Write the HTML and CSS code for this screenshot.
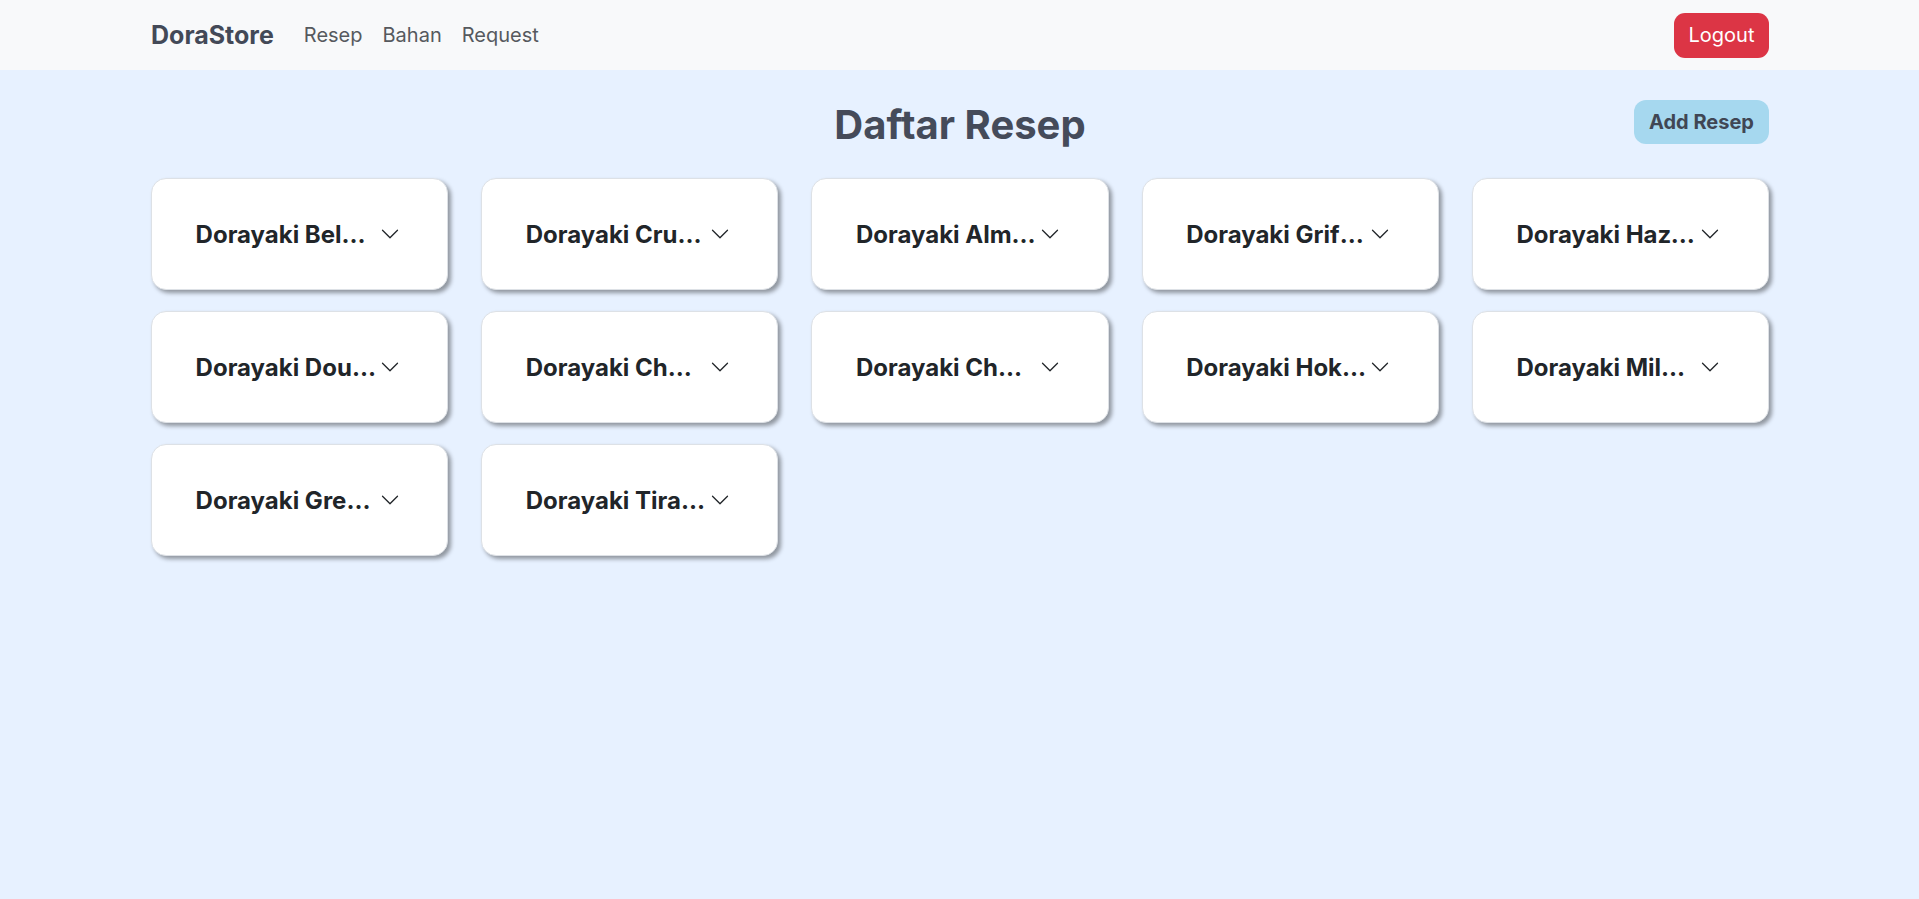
FILE: index.html
```html
<!DOCTYPE html>
<html lang="id">
<head>
<meta charset="utf-8">
<title>DoraStore - Daftar Resep</title>
<link rel="stylesheet" href="styles.css">
</head>
<body>
<nav class="navbar">
  <div class="nav-left">
    <a class="brand" href="#">DoraStore</a>
    <a class="nav-link" href="#">Resep</a>
    <a class="nav-link" href="#">Bahan</a>
    <a class="nav-link" href="#">Request</a>
  </div>
  <button class="btn-logout">Logout</button>
</nav>
<main class="main">
  <div class="page-head">
    <div></div>
    <h1 class="page-title">Daftar Resep</h1>
    <button class="btn-add">Add Resep</button>
  </div>
  <div class="grid">
    <div class="card"><span class="card-title">Dorayaki Belgian Chocolate</span><svg class="chev" viewBox="0 0 16 16"><path d="M1.646 4.646a.5.5 0 0 1 .708 0L8 10.293l5.646-5.647a.5.5 0 0 1 .708.708l-6 6a.5.5 0 0 1-.708 0l-6-6a.5.5 0 0 1 0-.708z"/></svg></div>
    <div class="card"><span class="card-title">Dorayaki Crunchy Cheese</span><svg class="chev" viewBox="0 0 16 16"><path d="M1.646 4.646a.5.5 0 0 1 .708 0L8 10.293l5.646-5.647a.5.5 0 0 1 .708.708l-6 6a.5.5 0 0 1-.708 0l-6-6a.5.5 0 0 1 0-.708z"/></svg></div>
    <div class="card"><span class="card-title">Dorayaki Almond Crunch</span><svg class="chev" viewBox="0 0 16 16"><path d="M1.646 4.646a.5.5 0 0 1 .708 0L8 10.293l5.646-5.647a.5.5 0 0 1 .708.708l-6 6a.5.5 0 0 1-.708 0l-6-6a.5.5 0 0 1 0-.708z"/></svg></div>
    <div class="card"><span class="card-title">Dorayaki Grifin Cheese</span><svg class="chev" viewBox="0 0 16 16"><path d="M1.646 4.646a.5.5 0 0 1 .708 0L8 10.293l5.646-5.647a.5.5 0 0 1 .708.708l-6 6a.5.5 0 0 1-.708 0l-6-6a.5.5 0 0 1 0-.708z"/></svg></div>
    <div class="card"><span class="card-title">Dorayaki Hazelnut</span><svg class="chev" viewBox="0 0 16 16"><path d="M1.646 4.646a.5.5 0 0 1 .708 0L8 10.293l5.646-5.647a.5.5 0 0 1 .708.708l-6 6a.5.5 0 0 1-.708 0l-6-6a.5.5 0 0 1 0-.708z"/></svg></div>
    <div class="card"><span class="card-title">Dorayaki Double Choco</span><svg class="chev" viewBox="0 0 16 16"><path d="M1.646 4.646a.5.5 0 0 1 .708 0L8 10.293l5.646-5.647a.5.5 0 0 1 .708.708l-6 6a.5.5 0 0 1-.708 0l-6-6a.5.5 0 0 1 0-.708z"/></svg></div>
    <div class="card"><span class="card-title">Dorayaki Ch… Cheese</span><svg class="chev" viewBox="0 0 16 16"><path d="M1.646 4.646a.5.5 0 0 1 .708 0L8 10.293l5.646-5.647a.5.5 0 0 1 .708.708l-6 6a.5.5 0 0 1-.708 0l-6-6a.5.5 0 0 1 0-.708z"/></svg></div>
    <div class="card"><span class="card-title">Dorayaki Ch… Chocolate</span><svg class="chev" viewBox="0 0 16 16"><path d="M1.646 4.646a.5.5 0 0 1 .708 0L8 10.293l5.646-5.647a.5.5 0 0 1 .708.708l-6 6a.5.5 0 0 1-.708 0l-6-6a.5.5 0 0 1 0-.708z"/></svg></div>
    <div class="card"><span class="card-title">Dorayaki Hokkaido</span><svg class="chev" viewBox="0 0 16 16"><path d="M1.646 4.646a.5.5 0 0 1 .708 0L8 10.293l5.646-5.647a.5.5 0 0 1 .708.708l-6 6a.5.5 0 0 1-.708 0l-6-6a.5.5 0 0 1 0-.708z"/></svg></div>
    <div class="card"><span class="card-title">Dorayaki Mil… Tea</span><svg class="chev" viewBox="0 0 16 16"><path d="M1.646 4.646a.5.5 0 0 1 .708 0L8 10.293l5.646-5.647a.5.5 0 0 1 .708.708l-6 6a.5.5 0 0 1-.708 0l-6-6a.5.5 0 0 1 0-.708z"/></svg></div>
    <div class="card"><span class="card-title">Dorayaki Green Tea</span><svg class="chev" viewBox="0 0 16 16"><path d="M1.646 4.646a.5.5 0 0 1 .708 0L8 10.293l5.646-5.647a.5.5 0 0 1 .708.708l-6 6a.5.5 0 0 1-.708 0l-6-6a.5.5 0 0 1 0-.708z"/></svg></div>
    <div class="card"><span class="card-title">Dorayaki Tiramisu</span><svg class="chev" viewBox="0 0 16 16"><path d="M1.646 4.646a.5.5 0 0 1 .708 0L8 10.293l5.646-5.647a.5.5 0 0 1 .708.708l-6 6a.5.5 0 0 1-.708 0l-6-6a.5.5 0 0 1 0-.708z"/></svg></div>
  </div>
</main>
</body>
</html>
```
FILE: styles.css
```css
* { box-sizing: border-box; }
html, body { margin: 0; padding: 0; }
body {
  background: #e7f1ff;
  font-family: Inter, "Noto Sans", sans-serif;
  color: #212529;
  min-height: 899px;
}
.navbar {
  height: 70px;
  background: #f8f9fa;
  display: flex;
  align-items: center;
  justify-content: space-between;
  padding: 0 150px 0 151px;
}
.nav-left { display: flex; align-items: center; }
.brand {
  font-size: 25px;
  font-weight: 700;
  color: #434957;
  text-decoration: none;
  margin-right: 30px;
}
.nav-link {
  font-size: 20px;
  color: #56595e;
  text-decoration: none;
  margin-right: 20px;
}
.btn-logout {
  font-family: inherit;
  font-size: 20px;
  color: #fff;
  background: #dc3545;
  border: none;
  border-radius: 11px;
  width: 95px;
  height: 45px;
  padding: 0;
}
.main { padding: 0 150px 0 151px; }
.page-head {
  display: grid;
  grid-template-columns: 1fr auto 1fr;
  align-items: start;
  margin-top: 28px;
}
.page-title {
  margin: 3px 0 0;
  font-size: 40px;
  font-weight: 700;
  line-height: 48px;
  color: #454b5a;
}
.btn-add {
  justify-self: end;
  margin-top: 2px;
  font-family: inherit;
  font-size: 20px;
  font-weight: 700;
  color: #404654;
  background: #a6d8ef;
  border: none;
  border-radius: 12px;
  width: 135px;
  height: 44px;
  padding: 0;
}
.grid {
  margin-top: 29px;
  display: grid;
  grid-template-columns: repeat(5, 1fr);
  column-gap: 33px;
  row-gap: 21px;
}
.card {
  height: 112px;
  background: #fff;
  border: 1px solid #dde1e6;
  border-radius: 15px;
  box-shadow: 3px 3px 4px rgba(0, 0, 0, 0.38);
  display: flex;
  align-items: center;
  justify-content: center;
  padding-right: 4px;
}
.card-title {
  width: 182px;
  font-size: 24px;
  font-weight: 700;
  white-space: nowrap;
  overflow: hidden;
  text-overflow: ellipsis;
  color: #212529;
}
.chev {
  width: 20px;
  height: 20px;
  margin-left: 2px;
  fill: #212529;
  flex: none;
}
```
